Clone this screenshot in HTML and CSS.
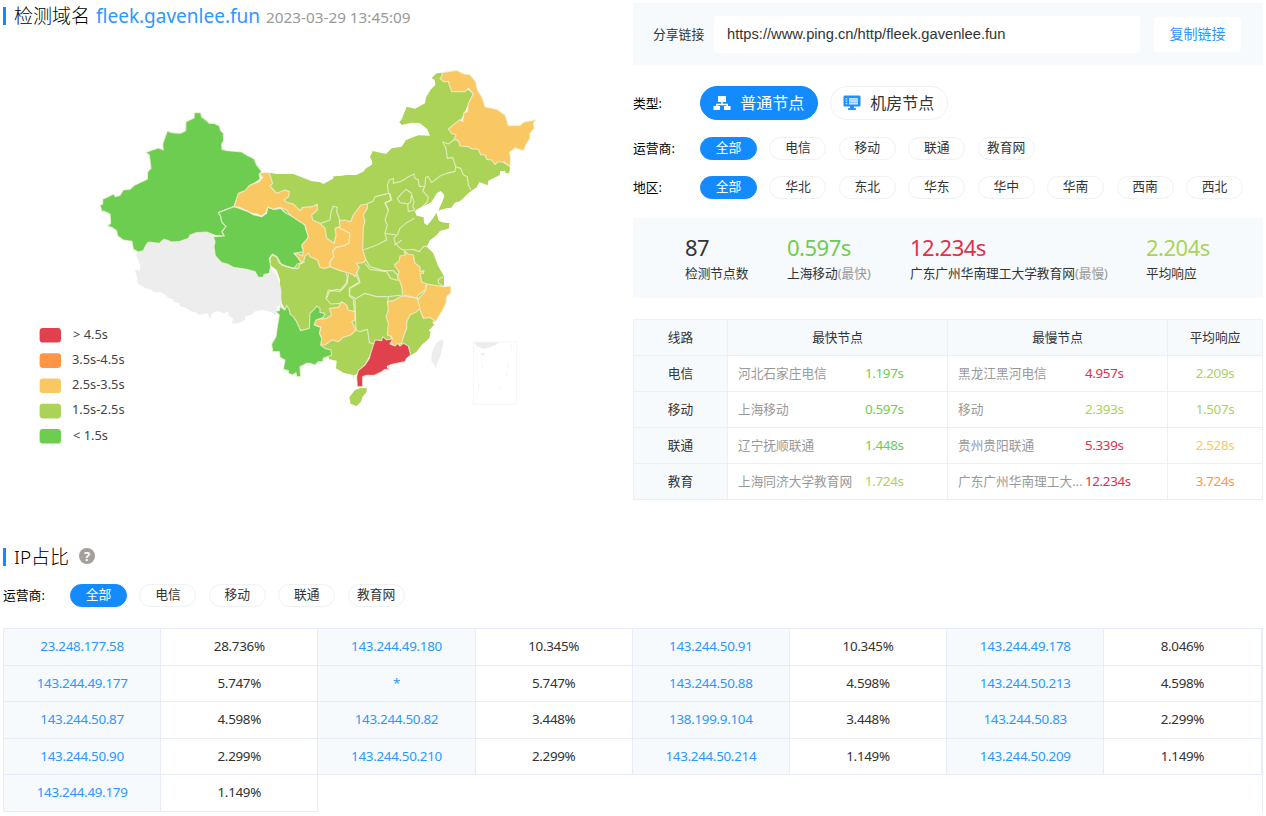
FILE: index.html
```html
<!DOCTYPE html>
<html lang="zh-CN">
<head>
<meta charset="utf-8">
<title>检测域名 fleek.gavenlee.fun</title>
<link rel="stylesheet" href="styles.css">
</head>
<body>
<main class="page">
  <div class="top">
    <section class="map-panel">
      <h1 class="title"><span>检测域名</span> <a class="domain">fleek.gavenlee.fun</a> <time class="time">2023-03-29 13:45:09</time></h1>
      <svg class="map" width="617" height="380" viewBox="3 50 617 380">
        <!-- base land -->
        <g class="land c2">
          <path transform="translate(340 60) scale(.33333)" d="M-20,349L48,346 72,335 85,322 100,312 90,290 98,273 138,282 155,265 185,260 198,240 235,226 270,227 262,208 240,190 215,188 185,195 178,186 185,178 200,140 225,146 255,130 258,112 273,88 286,75 284,60 275,54 290,40 306,38 400,100 345,220 510,320 508,338 497,340 495,332 480,334 480,345 460,355 445,362 443,376 418,366 410,382 398,390 385,400 360,424 340,428 335,443 305,445 295,452 305,430 315,405 312,395 300,393 290,400 275,425 230,448 225,455 230,468 250,472 252,490 262,498 275,485 290,460 293,480 305,488 328,490 327,505 300,512 290,525 270,540 -20,540Z"/>
          <path transform="translate(230 160) scale(.33333)" d="M118,38L140,42 190,42 215,52 245,64 270,66 280,72 320,50 350,45 380,45 400,35 408,25 425,15 430,0 690,0 690,120 675,128 665,140 630,150 625,155 640,128 643,105 632,93 620,98 600,128 560,148 553,155 560,168 580,172 582,190 592,196 605,180 620,158 625,180 635,187 658,190 656,205 630,212 618,225 595,245 588,262 605,275 612,300 640,345 642,375 600,420 150,420 150,340 120,300 125,285 200,200 118,100Z"/>
          <path transform="translate(260 240) scale(.33333)" d="M35,45L30,75 50,90 62,125 65,190 100,250 200,340 208,358 230,362 228,385 250,398 280,405 278,420 282,405 300,400 350,310 450,347 470,335 485,315 508,295 512,275 506,272 522,255 517,245 525,245 500,200 540,140 552,138 552,110 535,80 520,40 500,20 508,5 505,0 120,0Z"/>
          <path transform="translate(260 240) scale(.33333)" d="M285,450L300,445 320,444 320,455 308,470 303,485 290,498 272,492 268,472 280,456Z"/>
        </g>
        <!-- west -->
        <g transform="translate(90 100) scale(.33333)">
          <path class="none" d="M145,456L160,452 175,426 208,420 300,400 350,393 370,400 376,468 495,512 538,522 542,505 560,525 568,545 574,570 574,610 560,622 558,645 553,644 545,636 530,632 515,630 490,636 488,643 465,650 465,660 448,670 425,671 430,656 415,645 416,635 400,640 385,633 365,640 360,660 354,640 325,644 320,638 300,632 290,625 270,618 268,610 250,605 248,597 235,595 228,585 210,576 192,577 180,568 165,565 142,550 143,536 135,514 140,508 148,514 152,500 143,475 138,464Z"/>
          <path class="land c1" d="M313,38L332,38 335,52 345,58 358,70 372,70 388,78 392,92 400,100 401,122 395,132 396,148 412,152 455,156 475,168 492,176 500,195 515,215 508,224 510,238 495,248 478,258 468,275 448,280 440,300 432,320 385,338 392,348 395,365 408,380 396,395 403,408 375,406 350,396 320,398 300,405 296,415 270,424 245,426 222,417 208,430 175,426 168,435 160,452 145,456 130,448 126,424 100,420 83,408 80,392 65,382 52,378 62,370 60,342 42,334 36,333 30,316 38,312 38,298 55,290 70,282 76,290 90,286 100,270 120,268 133,256 172,238 173,215 183,205 178,165 167,157 205,144 220,150 218,132 232,93 245,98 272,100 287,92 288,65 312,54Z"/>
          <path class="land c1" d="M385,338L432,320 448,325 475,335 490,344 515,350 530,340 533,322 555,328 572,325 585,338 605,348 625,352 645,375 648,390 656,408 648,425 636,440 642,455 612,460 625,470 635,488 622,492 612,505 590,500 575,495 562,472 548,462 538,475 542,500 538,520 522,524 520,532 505,532 495,515 470,508 430,502 412,492 395,488 376,468 372,440 375,425 370,410 403,408 396,395 408,380 395,365 392,348Z"/>
        </g>
        <!-- northwest -->
        <g transform="translate(230 160) scale(.33333)">
          <path class="land c3" d="M88,42L95,38 118,38 128,70 120,78 140,100 165,90 178,95 176,110 162,120 170,127 190,132 210,152 218,142 245,140 262,133 262,150 245,165 248,180 270,190 285,205 290,235 312,250 318,225 315,205 330,200 345,212 360,220 357,250 340,258 318,262 308,275 312,290 300,305 300,320 285,325 270,322 262,300 240,290 235,280 225,288 222,300 215,310 205,295 192,280 205,282 218,288 220,270 215,255 235,232 225,195 205,182 180,165 170,150 150,142 130,148 113,140 108,158 95,168 80,162 65,160 45,150 28,142 12,140 25,100 45,92 60,75 88,65 98,52Z"/>
          <path class="land c3" d="M412,132L412,145 400,165 405,185 400,200 398,270 408,300 400,308 378,310 388,322 375,350 365,342 330,332 300,320 300,305 312,290 308,275 318,262 340,258 357,250 360,220 345,212 330,205 328,182 345,180 362,185 370,165 385,145 392,135Z"/>
          <path class="line" d="M272,190L300,180 303,155 310,138 322,142 320,155 330,180M480,100L485,120 465,128 475,150 465,180 472,195 465,220 470,240 440,255 400,270M465,220L500,225 492,235 495,248 505,260 515,268 530,270 550,268 568,275 580,260 595,258M553,175L530,188 510,205 502,225M408,300L420,320 460,332 490,332 505,348 512,362M118,300L125,285 140,290 148,310 168,318 190,325 205,325 210,312 225,305M355,342L352,370 335,390 320,388 298,395 290,415M378,345L388,365 358,385 358,405 375,415"/>
        </g>
        <!-- northeast -->
        <g transform="translate(340 60) scale(.33333)">
          <path class="land c3" d="M306,38L350,31 372,42 390,44 407,65 412,90 425,110 435,140 470,148 495,165 505,197 540,196 552,186 575,182 588,179 580,190 583,205 570,220 570,235 560,250 550,272 525,264 508,278 512,290 510,320 492,306 472,306 465,314 455,300 440,298 435,285 422,284 415,268 395,266 385,260 360,258 355,242 342,238 348,225 335,220 325,207 360,178 368,185 372,158 382,155 385,130 400,102 385,85 375,95 335,95 328,75 325,65 310,65 300,55 306,48Z"/>
          <path class="line" d="M342,240L325,252 308,246 318,265 322,295 338,292 347,320 362,325 370,345 382,350 385,375 393,390M347,320L345,334 320,340 300,348 275,368 265,350 257,352 255,378 238,380 235,360 225,355 222,342 205,350 195,358 180,365 160,370 160,355 148,360 142,375 146,400 105,410 98,425 82,430M148,400L152,420 135,430 145,450M255,378L248,392 265,412 262,425 245,442M198,388L215,400 212,425 205,432 180,428 172,415 185,400ZM214,402L222,425 218,440 225,450 205,455 203,432"/>
        </g>
        <!-- south -->
        <g transform="translate(260 240) scale(.33333)">
          <path class="land c3" d="M432,32L445,42 460,45 465,70 480,80 480,95 492,92 490,100 480,100 485,125 500,132 495,150 475,165 470,175 445,168 428,165 425,140 418,120 412,115 417,95 403,75 418,62 420,48 436,45Z"/>
          <path class="land c3" d="M500,132L550,140 572,138 573,158 560,170 558,190 545,215 527,245 510,232 490,235 480,210 472,180 495,155Z"/>
          <path class="land c3" d="M472,175L480,205 470,215 450,225 440,245 440,265 430,290 425,310 400,318 388,305 395,290 382,285 385,250 378,230 385,210 382,185 400,182 425,168 445,170Z"/>
          <path class="land c3" d="M245,185L260,195 265,210 285,215 285,240 275,245 288,270 272,285 250,292 235,305 215,300 195,315 182,315 185,295 178,280 182,262 165,255 162,240 200,235 215,225 208,205 235,202Z"/>
          <path class="land c1" d="M62,192L64,202 75,210 80,196 88,210 90,222 100,230 110,245 122,272 148,265 150,220 165,205 170,198 180,205 180,217 195,220 190,232 168,240 162,255 182,262 178,280 185,295 182,315 195,325 213,330 215,345 190,355 188,365 175,365 165,375 150,370 140,370 120,380 122,410 110,410 108,398 98,405 85,400 85,392 70,388 75,360 60,352 58,335 38,335 35,312 48,290 52,260 58,225 46,214 58,212 60,202Z"/>
          <path class="land c5" d="M368,290L380,300 398,296 390,312 405,318 412,310 420,318 430,310 445,318 452,345 440,355 435,365 400,372 390,375 385,390 375,388 365,395 345,405 320,406 308,410 308,440 292,440 290,410 295,392 315,375 328,355 332,340 345,300 365,302Z"/>
          <path class="line" d="M289,95L295,110 300,128 270,145 268,168 280,178 283,215M284,178L315,160 350,170 385,170 383,188M285,178L288,270 300,275 322,268 325,285 328,308 342,312M385,170L425,165M315,70L330,88 380,95 392,115 415,122M258,100L262,112 258,130 245,145 240,155 205,150 198,175 212,192 240,190M550,138L535,130 535,118 550,110M402,15L415,8 425,0"/>
          <path class="none" d="M545,298L550,300 550,312 540,350 532,370 528,388 523,375 514,362 515,340 523,322 530,308Z"/>
          <path class="none" d="M642,306H720L700,318 672,327 650,318ZM662,340L675,338 668,348ZM380,378L390,374 390,382 382,387Z"/>
          <path class="isle" d="M640,306H770V493H640ZM665,365L668,385M655,430L658,445M685,473L692,470M716,452L726,440M738,410L742,395M744,370L746,385M750,310L756,318 754,330"/>
        </g>
        <!-- legend -->
        <g class="legend">
          <rect class="c5" x="39.6" y="328" width="21.4" height="14.6" rx="3.4"/><text x="73" y="339">&gt; 4.5s</text>
          <rect class="c4" x="39.6" y="353.3" width="21.4" height="14.6" rx="3.4"/><text x="72" y="364">3.5s-4.5s</text>
          <rect class="c3" x="39.6" y="378.5" width="21.4" height="14.6" rx="3.4"/><text x="72" y="389">2.5s-3.5s</text>
          <rect class="c2" x="39.6" y="403.8" width="21.4" height="14.6" rx="3.4"/><text x="72" y="414">1.5s-2.5s</text>
          <rect class="c1" x="39.6" y="429" width="21.4" height="14.6" rx="3.4"/><text x="73" y="440">&lt; 1.5s</text>
        </g>
      </svg>
    </section>

    <section class="result">
      <div class="share">
        <span class="share-label">分享链接</span>
        <span class="share-url">https://www.ping.cn/http/fleek.gavenlee.fun</span>
        <a class="copy">复制链接</a>
      </div>
      <div class="filter types">
        <span class="label">类型:</span>
        <a class="big on"><svg width="18" height="16" viewBox="0 0 18 16"><path fill="#fff" d="M5 1h8v6H9.700v1.800H15V11h2.500v4h-6.500v-4h2.500v-.8h-9v.8H7v4H.5v-4H3V8.800h5.300V7H5z"/></svg>普通节点</a>
        <a class="big"><svg width="18" height="16" viewBox="0 0 18 16"><path fill="#2190ff" d="M1.500 .5h15q1 0 1 1v9q0 1-1 1H11v1.700h2V15H5v-1.800h2v-1.700H1.500q-1 0-1-1v-9q0-1 1-1z"/><path fill="#8dc5ff" d="M6 3h9v6.500H6z"/><path stroke="#d5eaff" stroke-width="1.200" d="M2.600 3.800h1.600M2.600 6.200h1.600M2.600 8.600h1.600M6 3.800h9M6 6.200h9M6 8.600h9"/></svg>机房节点</a>
      </div>
      <div class="filter operators">
        <span class="label">运营商:</span>
        <a class="pill on">全部</a><a class="pill">电信</a><a class="pill">移动</a><a class="pill">联通</a><a class="pill">教育网</a>
      </div>
      <div class="filter regions">
        <span class="label">地区:</span>
        <a class="pill on">全部</a><a class="pill">华北</a><a class="pill">东北</a><a class="pill">华东</a><a class="pill">华中</a><a class="pill">华南</a><a class="pill">西南</a><a class="pill">西北</a>
      </div>
      <div class="summary">
        <div><b>87</b><p>检测节点数</p></div>
        <div><b class="t1">0.597s</b><p>上海移动<i>(最快)</i></p></div>
        <div><b class="t5">12.234s</b><p>广东广州华南理工大学教育网<i>(最慢)</i></p></div>
        <div><b class="t2">2.204s</b><p>平均响应</p></div>
      </div>
      <div class="lines">
        <span class="th">线路</span><span class="th">最快节点</span><span class="th">最慢节点</span><span class="th">平均响应</span>
        <span class="rh">电信</span><span class="node"><em>河北石家庄电信</em><s class="t1">1.197s</s></span><span class="node"><em>黑龙江黑河电信</em><s class="t5">4.957s</s></span><span class="avg t2">2.209s</span>
        <span class="rh">移动</span><span class="node"><em>上海移动</em><s class="t1">0.597s</s></span><span class="node"><em>移动</em><s class="t2">2.393s</s></span><span class="avg t2">1.507s</span>
        <span class="rh">联通</span><span class="node"><em>辽宁抚顺联通</em><s class="t1">1.448s</s></span><span class="node"><em>贵州贵阳联通</em><s class="t5">5.339s</s></span><span class="avg t3">2.528s</span>
        <span class="rh">教育</span><span class="node"><em>上海同济大学教育网</em><s class="t2">1.724s</s></span><span class="node"><em>广东广州华南理工大...</em><s class="t5">12.234s</s></span><span class="avg t4">3.724s</span>
      </div>
    </section>
  </div>

  <section class="ip">
    <h2 class="title"><span>IP占比</span><span class="help">?</span></h2>
    <div class="filter">
      <span class="label">运营商:</span>
      <a class="pill on">全部</a><a class="pill">电信</a><a class="pill">移动</a><a class="pill">联通</a><a class="pill">教育网</a>
    </div>
    <div class="ips">
      <a>23.248.177.58</a><span>28.736%</span><a>143.244.49.180</a><span>10.345%</span><a>143.244.50.91</a><span>10.345%</span><a>143.244.49.178</a><span>8.046%</span>
      <a>143.244.49.177</a><span>5.747%</span><a>*</a><span>5.747%</span><a>143.244.50.88</a><span>4.598%</span><a>143.244.50.213</a><span>4.598%</span>
      <a>143.244.50.87</a><span>4.598%</span><a>143.244.50.82</a><span>3.448%</span><a>138.199.9.104</a><span>3.448%</span><a>143.244.50.83</a><span>2.299%</span>
      <a>143.244.50.90</a><span>2.299%</span><a>143.244.50.210</a><span>2.299%</span><a>143.244.50.214</a><span>1.149%</span><a>143.244.50.209</a><span>1.149%</span>
      <a>143.244.49.179</a><span>1.149%</span>
    </div>
  </section>
</main>
</body>
</html>
```
FILE: styles.css
```css
* { box-sizing: border-box; }
body {
  margin: 0;
  background: #fff;
  color: #333;
  font: 12.8px/20px "Noto Sans", "Noto Sans CJK SC", sans-serif;
  overflow: hidden;
}
p, h1, h2 { margin: 0; font-weight: 400; }
b, i, em { font-weight: 400; font-style: normal; }
s { text-decoration: none; }

.page { width: 1266px; height: 816px; padding: 3px 3px 0; }
.top { display: grid; grid-template-columns: 630px 630px; height: 541px; }
.map-panel { display: flex; flex-direction: column; }

.title {
  display: flex;
  align-items: center;
  height: 26px;
  color: #000;
  font-size: 19px;
  font-weight: 300;
  line-height: 26px;
  white-space: pre;
}
.title::before { content: ""; width: 3px; height: 18px; margin-right: 8px; background: #148aff; }
.domain { margin-left: 6px; color: #2b98ff; font-size: 19px; font-weight: 400; }
.time { margin-left: 6px; padding-top: 2px; color: #999; font-size: 15.3px; font-weight: 400; }

.map { display: block; margin-top: 21px; overflow: visible; }
.c1 { fill: #6dcd50; }
.c2 { fill: #abd358; }
.c3 { fill: #fac863; }
.c4 { fill: #ff9645; }
.c5 { fill: #e1404d; }
.none { fill: #ededed; }
.land.c1, .land.c3, .land.c5, .line { stroke: #f1f2dc; stroke-opacity: .75; stroke-width: 3.5; stroke-linejoin: round; }
.line { fill: none; }
.isle { fill: none; stroke: #f5f5f5; stroke-width: 3; }
.legend text { fill: #444; font-size: 12.8px; }

.t1 { color: #6dcd50; }
.t2 { color: #abd358; }
.t3 { color: #fac863; }
.t4 { color: #ff9645; }
.t5 { color: #e1304a; }

.share { display: flex; align-items: center; height: 62px; padding-left: 20px; background: #f6fafd; }
.share-label { width: 61px; }
.share-url {
  width: 426px;
  height: 37px;
  padding-left: 13px;
  border-radius: 4px;
  background: #fff;
  font: 14.7px/37px "Liberation Sans", sans-serif;
}
.copy {
  width: 87px;
  height: 35px;
  margin-left: 14px;
  border-radius: 4px;
  background: #fff;
  color: #2b98ff;
  font-size: 14px;
  line-height: 34px;
  text-align: center;
}

.filter { display: flex; align-items: center; height: 23px; }
.label { width: 67px; padding-bottom: 2px; color: #000; white-space: nowrap; }
.pill {
  width: 57px;
  height: 23px;
  margin-right: 12.43px;
  border: 1px solid #f0f1f2;
  border-radius: 12px;
  font-size: 12.8px;
  line-height: 19px;
  text-align: center;
  white-space: nowrap;
}
.types { height: 34px; margin-top: 21px; }
.types .label { padding: 0; }
.big {
  display: flex;
  align-items: center;
  justify-content: center;
  gap: 9px;
  width: 117.500px;
  height: 34px;
  margin-right: 12.500px;
  border: 1px solid #f0f1f2;
  border-radius: 17px;
  font-size: 16px;
}
.on { border-color: #148aff; background: #148aff; color: #fff; }
.operators { margin-top: 17px; }
.regions { margin-top: 16px; }

.summary {
  display: grid;
  grid-template-columns: 102px 123px 236px 1fr;
  height: 80px;
  margin-top: 19px;
  padding: 14px 0 0 52px;
  background: #f6fafd;
  white-space: nowrap;
}
.summary b { display: block; font-size: 22px; letter-spacing: -.5px; line-height: 30px; }
.summary p { margin-top: 1px; font-size: 12.7px; }
.summary i { color: #999; }

.lines {
  display: grid;
  grid-template-columns: 94px 220px 220px 95px;
  grid-auto-rows: 36px;
  width: 630px;
  height: 181px;
  margin-top: 21px;
  border: solid #edf0f3;
  border-width: 1px 0 0 1px;
  font-size: 12.7px;
  line-height: 34px;
  text-align: center;
}
.lines > span { border: solid #edf0f3; border-width: 0 1px 1px 0; }
.th, .rh { background: #f6fafd; }
.node { display: flex; padding-left: 10px; text-align: left; white-space: nowrap; }
.node em { width: 127px; color: #999; }
.node s, .avg { font-size: 13.4px; letter-spacing: -.35px; }

.ip .title { height: 26px; }
.help {
  width: 16px;
  height: 16px;
  margin: -2px 0 0 10px;
  border-radius: 50%;
  background: #a59f99;
  color: #fff;
  font-size: 13px;
  font-weight: 700;
  line-height: 16px;
  text-align: center;
}
.ip .filter { margin-top: 14px; }
.ips {
  display: grid;
  grid-template-columns: repeat(8, 157.2px);
  grid-auto-rows: 36.6px;
  width: 1260px;
  margin-top: 21px;
  border: solid #e8ebf9;
  border-width: 1px 1px 0 1px;
  font-size: 13.4px;
  letter-spacing: -.3px;
  line-height: 35px;
  text-align: center;
}
.ips > * { border: solid #e8ebf9; border-width: 0 1px 1px 0; }
.ips a { background: #f6fafd; color: #2b98ff; }
```
